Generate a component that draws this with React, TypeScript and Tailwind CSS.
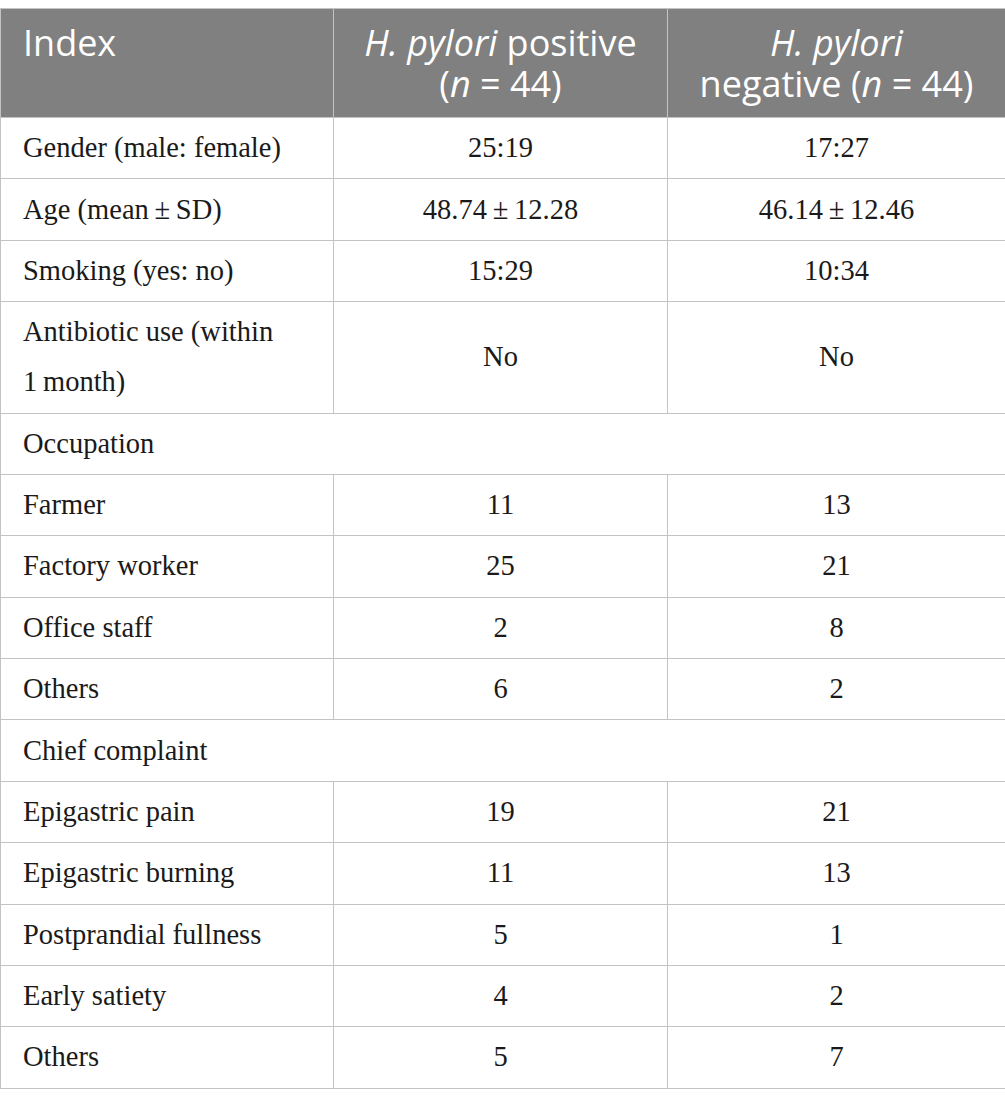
import React from "react";

type Row =
  | { kind: "data"; label: React.ReactNode; pos: string; neg: string }
  | { kind: "section"; label: string };

const rows: Row[] = [
  { kind: "data", label: "Gender (male: female)", pos: "25:19", neg: "17:27" },
  { kind: "data", label: "Age (mean\u2009±\u2009SD)", pos: "48.74\u2009±\u200912.28", neg: "46.14\u2009±\u200912.46" },
  { kind: "data", label: "Smoking (yes: no)", pos: "15:29", neg: "10:34" },
  {
    kind: "data",
    label: (
      <>
        Antibiotic use (within
        <br />
        1{"\u2009"}month)
      </>
    ),
    pos: "No",
    neg: "No",
  },
  { kind: "section", label: "Occupation" },
  { kind: "data", label: "Farmer", pos: "11", neg: "13" },
  { kind: "data", label: "Factory worker", pos: "25", neg: "21" },
  { kind: "data", label: "Office staff", pos: "2", neg: "8" },
  { kind: "data", label: "Others", pos: "6", neg: "2" },
  { kind: "section", label: "Chief complaint" },
  { kind: "data", label: "Epigastric pain", pos: "19", neg: "21" },
  { kind: "data", label: "Epigastric burning", pos: "11", neg: "13" },
  { kind: "data", label: "Postprandial fullness", pos: "5", neg: "1" },
  { kind: "data", label: "Early satiety", pos: "4", neg: "2" },
  { kind: "data", label: "Others", pos: "5", neg: "7" },
];

const cell = "border border-[#c3c3c3] py-[5.2px] align-middle";
const head = "border border-[#c3c3c3] pt-[13px] pb-[13px] align-top font-normal";

export default function App() {
  return (
    <div className="bg-white pt-[8px] min-h-[1108px]">
      <table className="w-[1005px] table-fixed border-collapse font-['Liberation_Serif',serif] text-[28.5px] leading-[50px] text-[#1a1a1a]">
        <colgroup>
          <col className="w-[333px]" />
          <col className="w-[334px]" />
          <col className="w-[338px]" />
        </colgroup>
        <thead>
          <tr className="bg-[#7f807f] font-['Open_Sans',sans-serif] text-[36px] leading-[41px] text-white">
            <th className={`${head} px-[22px] text-left`}>Index</th>
            <th className={`${head} px-[8px] text-center`}>
              <i>H. pylori</i> positive
              <br />
              (<i>n</i> = 44)
            </th>
            <th className={`${head} px-[8px] text-center`}>
              <i>H. pylori</i>
              <br />
              negative (<i>n</i> = 44)
            </th>
          </tr>
        </thead>
        <tbody>
          {rows.map((r, i) =>
            r.kind === "section" ? (
              <tr key={i}>
                <td colSpan={3} className={`${cell} px-[22px] text-left`}>
                  {r.label}
                </td>
              </tr>
            ) : (
              <tr key={i}>
                <td className={`${cell} px-[22px] text-left`}>{r.label}</td>
                <td className={`${cell} text-center`}>{r.pos}</td>
                <td className={`${cell} text-center`}>{r.neg}</td>
              </tr>
            )
          )}
        </tbody>
      </table>
    </div>
  );
}
